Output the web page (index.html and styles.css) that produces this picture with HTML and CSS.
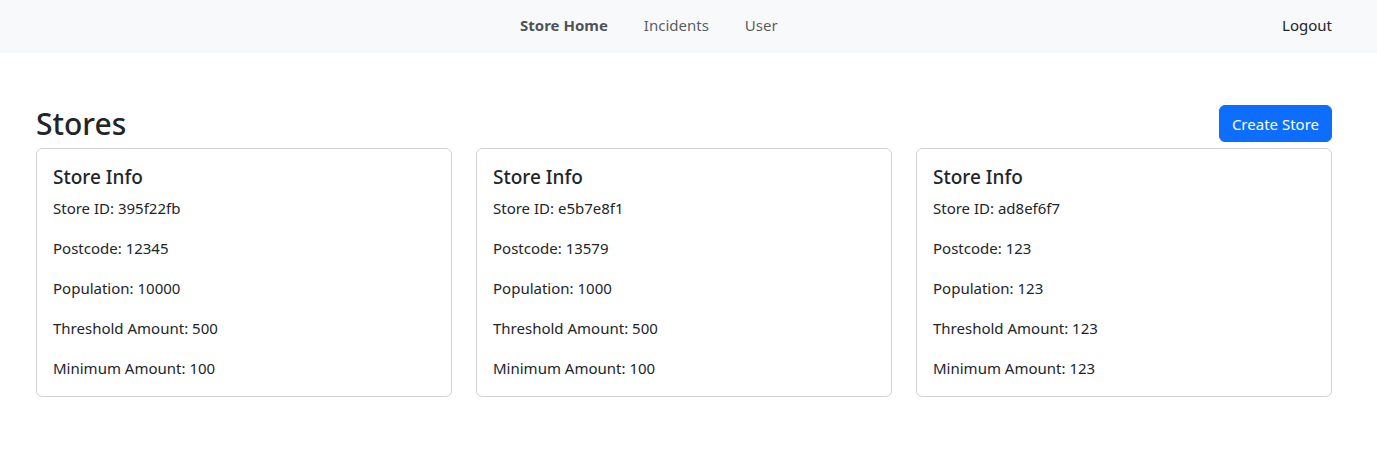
FILE: index.html
```html
<!DOCTYPE html>
<html lang="en">
<head>
<meta charset="utf-8">
<title>Stores</title>
<link rel="stylesheet" href="styles.css">
</head>
<body>
<nav class="navbar">
  <ul class="nav-center">
    <li><a class="nav-link active" href="#">Store Home</a></li>
    <li><a class="nav-link" href="#">Incidents</a></li>
    <li><a class="nav-link" href="#">User</a></li>
  </ul>
  <a class="nav-link logout" href="#">Logout</a>
</nav>
<main class="container">
  <div class="page-head">
    <h2 class="title">Stores</h2>
    <button class="btn-primary" type="button">Create Store</button>
  </div>
  <div class="cards">
    <div class="card">
      <h5 class="card-title">Store Info</h5>
      <p>Store ID: 395f22fb</p>
      <p>Postcode: 12345</p>
      <p>Population: 10000</p>
      <p>Threshold Amount: 500</p>
      <p>Minimum Amount: 100</p>
    </div>
    <div class="card">
      <h5 class="card-title">Store Info</h5>
      <p>Store ID: e5b7e8f1</p>
      <p>Postcode: 13579</p>
      <p>Population: 1000</p>
      <p>Threshold Amount: 500</p>
      <p>Minimum Amount: 100</p>
    </div>
    <div class="card">
      <h5 class="card-title">Store Info</h5>
      <p>Store ID: ad8ef6f7</p>
      <p>Postcode: 123</p>
      <p>Population: 123</p>
      <p>Threshold Amount: 123</p>
      <p>Minimum Amount: 123</p>
    </div>
  </div>
</main>
</body>
</html>
```

FILE: styles.css
```css
* { box-sizing: border-box; }
html, body { margin: 0; padding: 0; }
body {
  font-family: "Noto Sans", "Open Sans", sans-serif;
  font-size: 15px;
  line-height: 24px;
  color: #212529;
  background: #fff;
}
.navbar {
  height: 53px;
  background: #f8f9fa;
  display: flex;
  align-items: center;
  padding: 0 45px 4px 36px;
}
.nav-center {
  list-style: none;
  margin: 0;
  padding: 0 0 0 484px;
  display: flex;
  gap: 36px;
  flex: 1;
}
.nav-link {
  text-decoration: none;
  color: rgba(33, 37, 41, 0.75);
  font-size: 15px;
}
.nav-link.active {
  font-weight: 700;
  color: rgba(33, 37, 41, 0.8);
}
.logout { color: #212529; }
.container {
  padding: 52px 45px 0 36px;
}
.page-head {
  display: flex;
  justify-content: space-between;
  align-items: flex-end;
}
.title {
  margin: 0;
  font-size: 30px;
  font-weight: 500;
  line-height: 38px;
  padding-bottom: 5px;
}
.btn-primary {
  font-family: inherit;
  font-size: 15px;
  line-height: 24px;
  color: #fff;
  background: #0d6efd;
  border: 1px solid #0d6efd;
  border-radius: 6px;
  padding: 6px 12px;
  height: 37px;
  margin-bottom: 6px;
}
.cards {
  display: grid;
  grid-template-columns: repeat(3, 1fr);
  gap: 24px;
}
.card {
  border: 1px solid rgba(0, 0, 0, 0.175);
  border-radius: 6px;
  padding: 16px;
}
.card-title {
  margin: 0 0 7px;
  font-size: 19px;
  font-weight: 500;
  line-height: 24px;
}
.card p { margin: 0 0 16px; }
.card p:last-child { margin-bottom: 0; }
```
